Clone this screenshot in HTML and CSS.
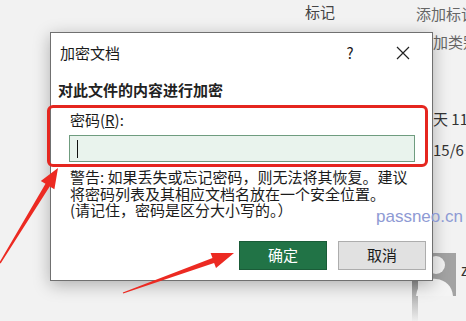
FILE: index.html
```html
<!DOCTYPE html>
<html lang="zh-CN">
<head>
<meta charset="utf-8">
<title>加密文档</title>
<link rel="stylesheet" href="styles.css">
</head>
<body>
<div class="page">
  <div class="bg">
    <span class="bg-t t1">标记</span>
    <span class="bg-t t2">添加标记</span>
    <span class="bg-t t3">加类别</span>
    <span class="bg-t t4">天 11</span>
    <span class="bg-t t5">15/6</span>
    <span class="bg-t t6">z</span>
    <svg class="avatar" width="60" height="80" viewBox="0 0 60 80">
      <defs>
        <linearGradient id="sh" x1="0" y1="0" x2="0" y2="1">
          <stop offset="0" stop-color="#8a8a8a"/>
          <stop offset="1" stop-color="#f0f0f0"/>
        </linearGradient>
      </defs>
      <rect x="0" y="28" width="6" height="44" fill="url(#sh)"/>
      <rect x="16" y="3" width="28" height="43" fill="#a3a3a3"/>
      <circle cx="24" cy="15" r="9" fill="#f4f4f4"/>
      <path d="M4 46 C6 32 14 28 24 29 C34 30 40 36 41 46 Z" fill="#f4f4f4"/>
    </svg>
  </div>

  <div class="dialog">
    <div class="titlebar">
      <span class="title">加密文档</span>
      <span class="help">?</span>
      <span class="close">
        <svg width="14" height="14" viewBox="0 0 14 14"><path d="M1 1 L13 13 M13 1 L1 13" stroke="#222" stroke-width="1.2" fill="none"/></svg>
      </span>
    </div>
    <div class="heading">对此文件的内容进行加密</div>
    <div class="field">
      <div class="label">密码(<u>R</u>):</div>
      <div class="input"><span class="caret"></span></div>
    </div>
    <div class="warning">
      <div>警告: 如果丢失或忘记密码，则无法将其恢复。建议</div>
      <div>将密码列表及其相应文档名放在一个安全位置。</div>
      <div>(请记住，密码是区分大小写的。）</div>
    </div>
    <div class="buttons">
      <button class="btn primary">确定</button>
      <button class="btn">取消</button>
    </div>
  </div>

  <div class="highlight"></div>
  <div class="watermark">passneo.cn</div>

  <svg class="arrows" width="466" height="321" viewBox="0 0 466 321">
    <polygon fill="#ec2a22" points="-0.6,262.6 45.5,183.8 40.8,180.9 58,168 54.4,189.3 49.7,186.4 0.6,263.4"/>
    <polygon fill="#ec2a22" points="122.8,292.5 212.5,258.1 210.6,253 234,253 216,268 214.1,262.9 123.2,293.5"/>
  </svg>
</div>
</body>
</html>
```

FILE: styles.css
```css
* { box-sizing: border-box; }
html, body { margin: 0; padding: 0; }
body {
  width: 466px;
  height: 321px;
  overflow: hidden;
  background: #f2f2f2;
  font-family: "Noto Sans CJK SC", "Noto Sans", sans-serif;
  color: #1b1b1b;
}
.page {
  position: relative;
  width: 466px;
  height: 321px;
  overflow: hidden;
}
.bg { position: absolute; inset: 0; }
.bg-t {
  position: absolute;
  font-size: 15px;
  line-height: 20px;
  color: #555;
  white-space: nowrap;
}
.t1 { left: 305px; top: 2px; color: #444; }
.t2 { left: 416px; top: 4px; color: #666; }
.t3 { left: 433px; top: 32px; color: #666; }
.t4 { left: 433px; top: 109px; color: #333; }
.t5 { left: 433px; top: 140px; color: #333; }
.t6 { left: 461px; top: 260px; color: #333; }
.avatar { position: absolute; left: 412px; top: 250px; }

.dialog {
  position: absolute;
  left: 50px;
  top: 32px;
  width: 383px;
  height: 249px;
  background: #fff;
  border: 1px solid #707070;
  box-shadow: 0 4px 16px rgba(0,0,0,0.28);
  display: flex;
  flex-direction: column;
}
.titlebar {
  height: 39px;
  display: flex;
  align-items: center;
  padding-left: 9px;
}
.title { font-size: 15px; line-height: 20px; flex: 1; }
.help { font-size: 15px; line-height: 20px; width: 20px; text-align: center; margin-right: 36px; }
.close { width: 14px; height: 14px; display: flex; margin-right: 22px; }
.heading {
  margin-top: 8px;
  padding-left: 7px;
  font-size: 15px;
  line-height: 20px;
  font-weight: bold;
  color: #222;
}
.field { margin-top: 10px; padding-left: 18px; }
.label { font-size: 15px; line-height: 20px; padding-left: 1px; }
.input {
  margin-top: 5px;
  width: 346px;
  height: 27px;
  background: #e9f3ed;
  border: 1px solid #6f9c7f;
  display: flex;
  align-items: center;
  padding-left: 7px;
}
.caret { width: 1px; height: 18px; background: #111; }
.warning {
  margin-top: 7px;
  padding-left: 19px;
  font-size: 15px;
  line-height: 16.5px;
  white-space: nowrap;
}
.buttons {
  margin-top: 22px;
  display: flex;
  justify-content: flex-end;
  gap: 11px;
  padding-right: 6px;
}
.btn {
  width: 88px;
  height: 29px;
  font-family: "Noto Sans CJK SC", sans-serif;
  font-size: 15px;
  line-height: 20px;
  color: #1b1b1b;
  background: #e1e1e1;
  border: 1px solid #adadad;
  padding: 0;
}
.btn.primary {
  background: #217346;
  border-color: #1a5c38;
  color: #fff;
}
.highlight {
  position: absolute;
  left: 47px;
  top: 105px;
  width: 381px;
  height: 62px;
  border: 3.5px solid #e5261f;
  border-radius: 6px;
}
.watermark {
  position: absolute;
  left: 376px;
  top: 206px;
  font-family: "Liberation Sans", Arial, sans-serif;
  font-size: 17px;
  line-height: 22px;
  color: #8e9ad4;
}
.arrows { position: absolute; left: 0; top: 0; }
```
